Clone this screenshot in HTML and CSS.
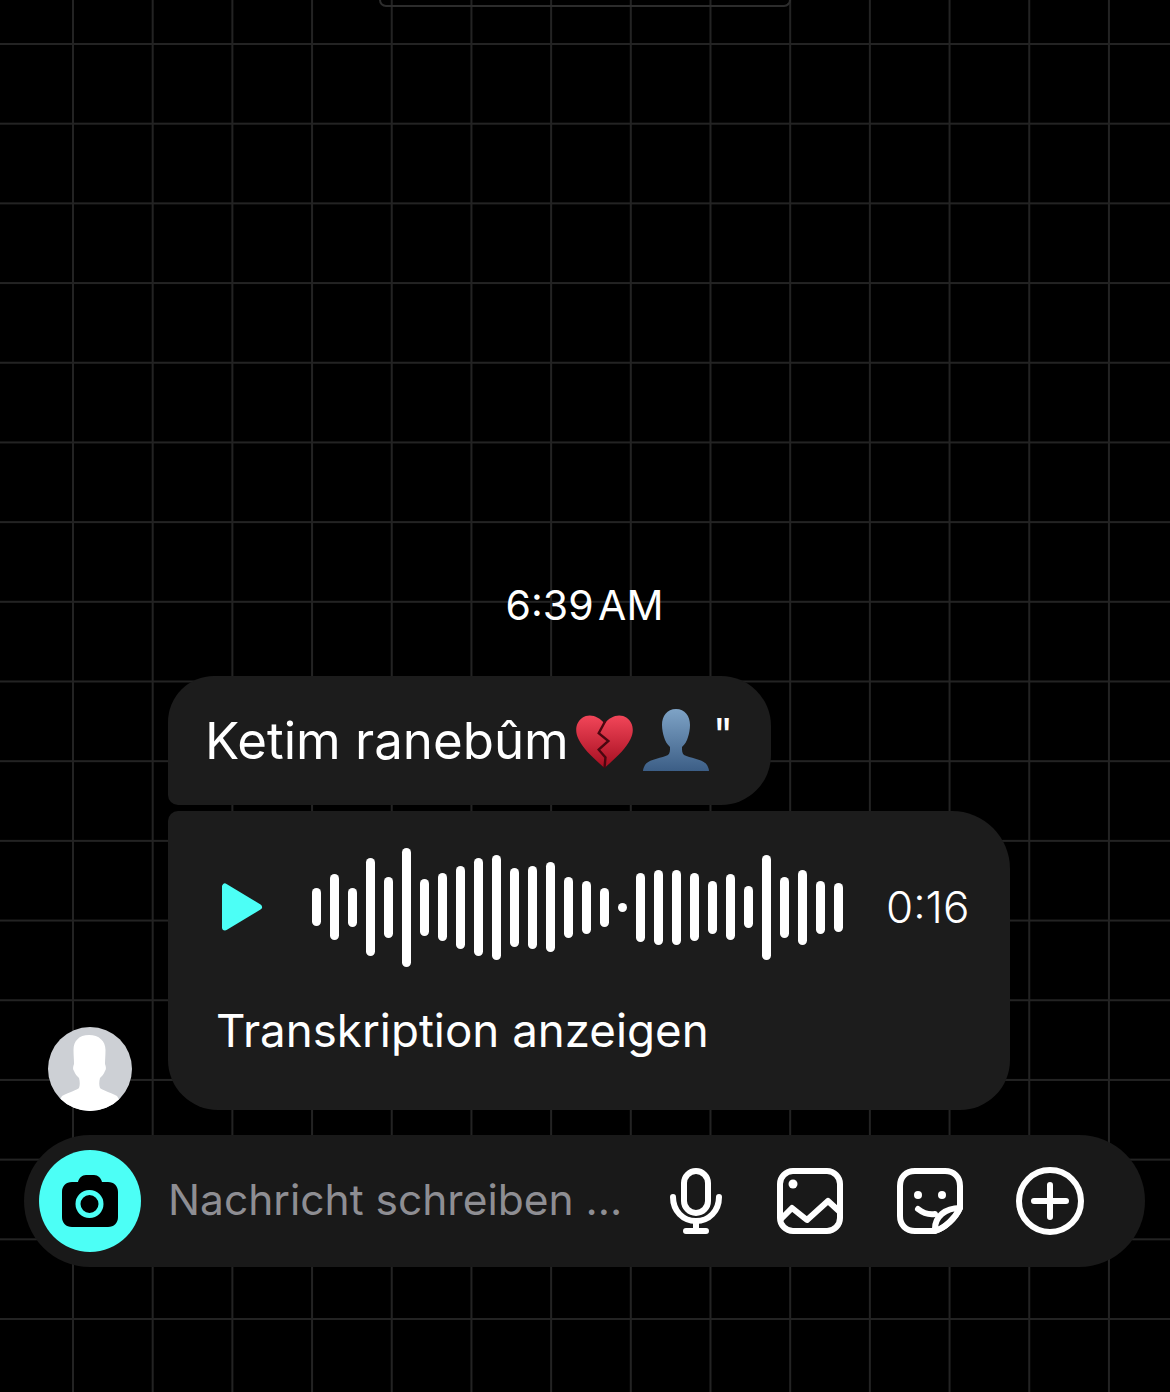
FILE: index.html
```html
<!DOCTYPE html>
<html lang="de">
<head>
  <meta charset="UTF-8" />
  <meta name="viewport" content="width=device-width, initial-scale=1.0"/>
  <title>Chat</title>
  <link rel="stylesheet" href="styles.css">
</head>
<body>

  <div class="chat">
    <div class="notch"></div>

    <div class="time">6:39 AM</div>

    <div class="msg-row">
      <!-- Avatar -->
      <div class="avatar">
        <svg viewBox="0 0 84 84" width="84" height="84">
          <path fill="#fff" d="M41 8c-10 0-15.500 6-15.500 15 0 5 .5 10 .5 14-1 3-1.500 5 0 7 1 3 3 5 5 7 1 4 1 7 0 10-2 2-9 4-17 8L6 84h72l-9-15c-8-4-15-6-17-8-1-3-1-6 0-10 2-2 4-4 5-7 1.500-2 1-4 0-7 0-4 .5-9 .5-14C57.500 14 51 8 41 8z"/>
        </svg>
      </div>

      <div class="bubbles">
        <div class="bubble bubble-text">
          <span>Ketim ranebûm</span>
          <!-- broken heart -->
          <svg class="emoji-heart" viewBox="0 0 60 56" width="59" height="54">
            <defs>
              <linearGradient id="heartRed" x1="0" y1="0" x2="0" y2="1">
                <stop offset="0" stop-color="#f24659"/>
                <stop offset="1" stop-color="#a50e20"/>
              </linearGradient>
            </defs>
            <path fill="url(#heartRed)" d="M30 10C24 2 14-1 7 4 0 9-1 18 3 26c5 11 17 21 27 30 10-9 22-19 27-30 4-8 3-17-4-22-7-5-17-2-23 6z"/>
            <path fill="none" stroke="#4a0710" stroke-width="2.500" stroke-linejoin="miter" d="M31 7l-7 13 10 8-10 9 7 8-1 11"/>
          </svg>
          <!-- silhouette -->
          <svg class="emoji-person" viewBox="0 0 66 62" width="66" height="62">
            <defs>
              <linearGradient id="personBlue" x1="0" y1="0" x2="0" y2="1">
                <stop offset="0" stop-color="#7ea3c6"/>
                <stop offset="1" stop-color="#3c5e86"/>
              </linearGradient>
            </defs>
            <path fill="url(#personBlue)" d="M33 0c-9 0-14 7-14 16 0 4 1 9 2 12 1 4 3 7 6 10 0 4 0 6-2 8-6 3-19 4-23 10-1 2-2 4-2 6h66c0-2-1-4-2-6-4-6-17-7-23-10-2-2-2-4-2-8 3-3 5-6 6-10 1-3 2-8 2-12C47 7 42 0 33 0z"/>
          </svg>
          <span class="quote">"</span>
        </div>

        <div class="bubble bubble-voice">
          <div class="player">
            <svg class="play" viewBox="0 0 42 50" width="42" height="50">
              <path fill="#4cfff6" stroke="#4cfff6" stroke-width="6" stroke-linejoin="round" d="M4 4.500v41l34-20.500z"/>
            </svg>
            <div class="wave">
              <span style="height:38px"></span><span style="height:66px"></span><span style="height:39px"></span><span style="height:98px"></span><span style="height:61px"></span><span style="height:119px"></span><span style="height:57px"></span><span style="height:68px"></span><span style="height:83px"></span><span style="height:98px"></span><span style="height:105px"></span><span style="height:79px"></span><span style="height:83px"></span><span style="height:90px"></span><span style="height:61px"></span><span style="height:53px"></span><span style="height:39px"></span><span style="height:9px"></span><span style="height:69px"></span><span style="height:75px"></span><span style="height:75px"></span><span style="height:68px"></span><span style="height:53px"></span><span style="height:66px"></span><span style="height:42px"></span><span style="height:105px"></span><span style="height:61px"></span><span style="height:75px"></span><span style="height:53px"></span><span style="height:49px"></span>
            </div>
            <div class="duration">0:16</div>
          </div>
          <div class="transcript">Transkription anzeigen</div>
        </div>
      </div>
    </div>

    <!-- Message input -->
    <div class="composer">
      <div class="camera">
        <svg viewBox="0 0 56 52" width="56" height="52">
          <path fill="#000" d="M10 7h6c1-4 4-7 8-7h8c4 0 7 3 8 7h6c6 0 10 4 10 10v25c0 6-4 10-10 10H10C4 52 0 48 0 42V17C0 11 4 7 10 7z"/>
          <circle cx="27.500" cy="29" r="11.500" fill="none" stroke="#4cfff6" stroke-width="5"/>
        </svg>
      </div>
      <div class="placeholder">Nachricht schreiben ...</div>
      <div class="icons">
        <svg viewBox="0 0 52 66" width="52" height="66" fill="none" stroke="#fff" stroke-width="6" stroke-linecap="round" stroke-linejoin="round">
          <rect x="14" y="3" width="24" height="42" rx="12"/>
          <path d="M3 29c0 14 10 24 23 24s23-10 23-24"/>
          <path d="M26 53v10M16 63h20"/>
        </svg>
        <svg class="icon-image" viewBox="0 0 66 66" width="66" height="66" fill="none" stroke="#fff" stroke-width="6" stroke-linecap="round" stroke-linejoin="round">
          <rect x="3" y="3" width="60" height="60" rx="13"/>
          <path d="M4 51l11-11 15 12 21-19 12 11"/>
          <circle cx="16" cy="16" r="4.500" fill="#fff" stroke="none"/>
        </svg>
        <svg viewBox="0 0 66 66" width="66" height="66" fill="none" stroke="#fff" stroke-width="6" stroke-linecap="round" stroke-linejoin="round">
          <path d="M38 63H18C9 63 3 57 3 48V18C3 9 9 3 18 3h30c9 0 15 6 15 15v22C58 50 48 60 38 63z"/>
          <path d="M63 40c-14 0-26 8-25 23 10-3 21-13 25-23z"/>
          <path d="M21 41c5 4 10 6 17 5"/>
          <circle cx="21" cy="27" r="4" fill="#fff" stroke="none"/>
          <circle cx="45" cy="27" r="4" fill="#fff" stroke="none"/>
        </svg>
        <svg class="icon-plus" viewBox="0 0 68 68" width="68" height="68" fill="none" stroke="#fff" stroke-width="6" stroke-linecap="round">
          <circle cx="34" cy="34" r="31"/>
          <path d="M34 18v32M18 34h32"/>
        </svg>
      </div>
    </div>
  </div>

</body>
</html>
```

FILE: styles.css
```css
* {
  box-sizing: border-box;
  margin: 0;
  padding: 0;
  font-family: Inter, "Liberation Sans", sans-serif;
}

body {
  background-color: #000;
  background-image:
    linear-gradient(to right, #232323 2px, transparent 2px),
    linear-gradient(to bottom, #232323 2px, transparent 2px);
  background-size: 79.7px 79.7px;
  background-position: 72px 43px;
  height: 100vh;
  overflow: hidden;
}

.chat {
  display: flex;
  flex-direction: column;
  height: 100%;
  padding: 0 25px 125px 24px;
  color: #fff;
}

.notch {
  width: 412px;
  height: 7px;
  margin-left: 355px;
  border: 2px solid #2c2c2c;
  border-top: none;
  border-radius: 0 0 14px 14px;
}

.time {
  margin-top: auto;
  margin-bottom: 47px;
  text-align: center;
  font-size: 41px;
  line-height: 48px;
  word-spacing: -7px;
}

.msg-row {
  display: flex;
  align-items: flex-end;
  gap: 36px;
  padding-left: 24px;
}

.avatar {
  width: 84px;
  height: 84px;
  margin-bottom: -1px;
  border-radius: 50%;
  background: #cdd0d5;
  overflow: hidden;
}

.avatar svg {
  display: block;
}

.bubbles {
  display: flex;
  flex-direction: column;
  align-items: flex-start;
  gap: 6px;
}

.bubble {
  background: #1c1c1c;
}

.bubble-text {
  display: flex;
  align-items: center;
  width: 603px;
  height: 129px;
  padding: 0 0 0 37px;
  font-size: 51px;
  border-radius: 46px 50px 50px 10px;
}

.emoji-heart {
  margin: 1px 0 0 6px;
}

.emoji-person {
  margin: -2px 0 0 9px;
}

.quote {
  margin: -14px 0 0 4px;
  font-size: 44px;
}

.bubble-voice {
  width: 842px;
  height: 299px;
  padding: 36px 0 0 48px;
  border-radius: 10px 58px 50px 50px;
}

.player {
  display: flex;
  align-items: center;
  height: 120px;
}

.play {
  margin-left: 5px;
}

.wave {
  display: flex;
  align-items: center;
  gap: 9px;
  margin-left: 49px;
}

.wave span {
  display: block;
  width: 9px;
  border-radius: 5px;
  background: #fff;
}

.duration {
  margin-left: 43px;
  font-size: 44px;
  font-weight: 300;
}

.transcript {
  margin-top: 36px;
  font-size: 45.700px;
  line-height: 56px;
}

.composer {
  display: flex;
  align-items: center;
  height: 132px;
  margin-top: 25px;
  padding: 0 61px 0 15px;
  border-radius: 66px;
  background: #191919;
}

.camera {
  display: flex;
  align-items: center;
  justify-content: center;
  width: 102px;
  height: 102px;
  border-radius: 50%;
  background: #4cfff6;
}

.placeholder {
  margin: 0 0 3px 27px;
  font-size: 42.500px;
  color: #8e8e93;
}

.icons {
  display: flex;
  align-items: center;
  gap: 54px;
  margin-left: auto;
}

.icons svg {
  display: block;
}

.icons .icon-image {
  margin-left: 1px;
}

.icons .icon-plus {
  margin-left: -1px;
}
```
